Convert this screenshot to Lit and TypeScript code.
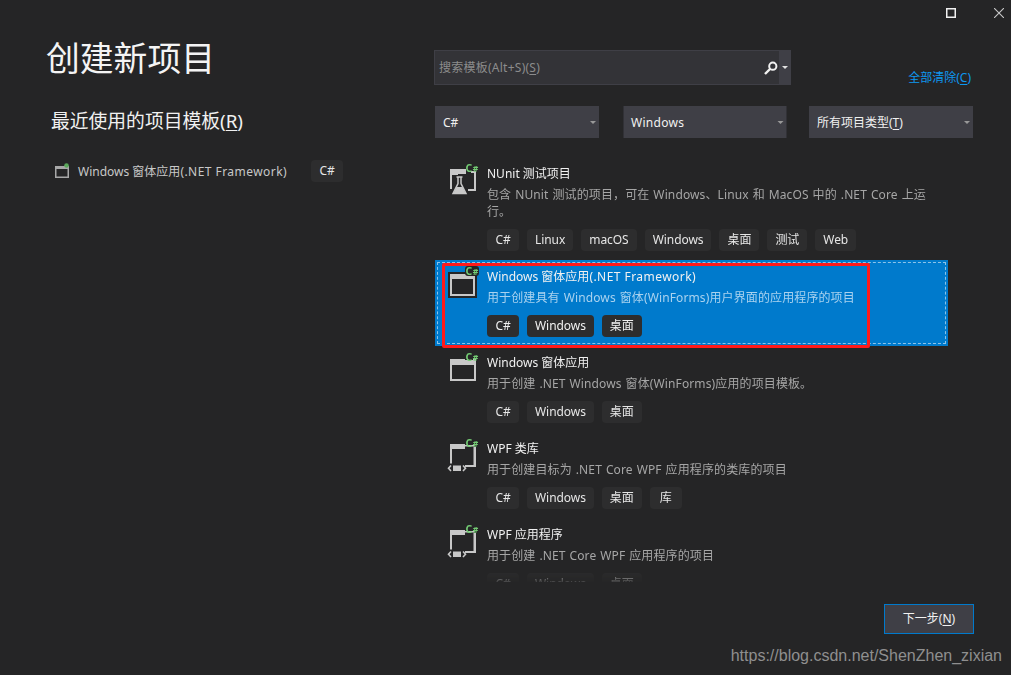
import { LitElement, html, css, svg } from "lit";
import { customElement } from "lit/decorators.js";

const badge = () => svg`<text class="cs" x="18.500" y="9.200" fill="#74cc74">C<tspan class="sharp" dx=".4">#</tspan></text>`;
const iconForm = svg`<path d="M3 7h15v1h8v-1h3v22H3z" fill="#c8c8c8"/><rect x="5" y="13" width="22" height="14" fill="#252526"/>`;
const iconFormSel = svg`<rect x="1" y="6" width="29" height="26" fill="#252526"/><rect x="3" y="8" width="25" height="22" fill="#c8c8c8"/><rect x="5" y="13" width="21" height="15" fill="#252526"/><rect x="18" y="0" width="14" height="10" rx="3" fill="#252526"/>`;
const iconWpf = svg`<path d="M3 6h15v1h9.500v1.500H18v2.500H5v14.500H3z" fill="#c8c8c8"/><path d="M26.500 9H29v20H18v-2h8.500z" fill="#c8c8c8"/><path d="M4 27.500l-2.500 2.700L4 33M16 27.500l2.500 2.700L16 33" stroke="#c8c8c8" stroke-width="1.600" fill="none"/><rect x="6" y="27.500" width="8" height="5.500" fill="#c8c8c8"/>`;
const iconTest = svg`<path d="M3 6h16v5h-8v1H5v14H3z" fill="#c8c8c8"/><path d="M24 8h5v20h-8v-2h6V10h-3z" fill="#c8c8c8"/><path d="M9 13h7v2h-1v5l5 10a1 1 0 0 1-1 2H6a1 1 0 0 1-1-2l5-10v-5H9z" fill="#252526" stroke="#252526" stroke-width="2"/><path d="M9.500 14h6M11 14v6.500L6 30.500h13L14 20.500V14" fill="none" stroke="#c8c8c8" stroke-width="1.500"/><path d="M9.500 24h6l3.500 7H6z" fill="#c8c8c8"/>`;

interface Item { title: unknown; desc: string; tags: string[]; icon: unknown; sel?: boolean }
const items: Item[] = [
  { title: "NUnit 测试项目", desc: "包含 NUnit 测试的项目，可在 Windows、Linux 和 MacOS 中的 .NET Core 上运行。", tags: ["C#", "Linux", "macOS", "Windows", "桌面", "测试", "Web"], icon: iconTest },
  { title: html`Windows 窗体应用<span class="lat">(.NET Framework)</span>`, desc: "用于创建具有 Windows 窗体(WinForms)用户界面的应用程序的项目", tags: ["C#", "Windows", "桌面"], icon: iconFormSel, sel: true },
  { title: "Windows 窗体应用", desc: "用于创建 .NET Windows 窗体(WinForms)应用的项目模板。", tags: ["C#", "Windows", "桌面"], icon: iconForm },
  { title: "WPF 类库", desc: "用于创建目标为 .NET Core WPF 应用程序的类库的项目", tags: ["C#", "Windows", "桌面", "库"], icon: iconWpf },
  { title: "WPF 应用程序", desc: "用于创建 .NET Core WPF 应用程序的项目", tags: ["C#", "Windows", "桌面"], icon: iconWpf },
];

@customElement("app-root")
export class AppRoot extends LitElement {
  static styles = css`
    :host { display: block; width: 1011px; height: 675px; background: #252526; color: #f1f1f1; position: relative; overflow: hidden;
      font: 12px/17px "Noto Sans", "Noto Sans CJK SC", sans-serif; }
    u { text-underline-offset: 2px; }
    .lat { letter-spacing: .45px; }
    .controls { height: 26px; display: flex; justify-content: flex-end; align-items: flex-start; gap: 38px; padding: 8px 7px 0 0; box-sizing: border-box; }
    .controls svg { display: block; width: 10px; height: 10px; }
    .main { display: grid; grid-template-columns: 435px 538px; }
    .left { padding-left: 46px; }
    h1 { margin: 6px 0 0; font: 400 33.800px/50px "Noto Sans CJK SC", sans-serif; color: #f4f4f4; }
    h2 { margin: 26px 0 0 5px; font: 400 18.800px/26px "Noto Sans", "Noto Sans CJK SC", sans-serif; color: #f1f1f1; }
    .recent { display: flex; align-items: center; margin: 26px 0 0 8px; color: #c8c8c8; height: 22px; }
    .recent svg { width: 16px; height: 16px; margin-right: 8px; flex: none; }
    .recent .tag { margin-left: 24px; }
    .right { padding-top: 24px; }
    .top { display: flex; align-items: flex-end; margin-left: -1px; }
    .search { width: 357px; height: 35px; box-sizing: border-box; display: flex; background: #333337; border: 1px solid #3f3f46; }
    .ph { flex: 1; padding-left: 4px; line-height: 34px; color: #8c8c8c; letter-spacing: .25px; }
    .sicon { width: 26px; display: flex; align-items: center; justify-content: flex-end; padding-right: 1px; box-sizing: border-box; }
    .sdrop { width: 11px; background: #3f3f46; display: flex; align-items: center; justify-content: center; }
    .link { margin-left: auto; margin-right: 2px; margin-bottom: -1px; line-height: 16px; color: #0e97f0; }
    .filters { display: grid; grid-template-columns: 164px 163px 164px; justify-content: space-between; margin-top: 21px; }
    .dd { height: 32px; background: #3f3f46; display: flex; align-items: center; justify-content: space-between; padding: 0 3px 0 8px; box-sizing: border-box; color: #f1f1f1; }
    .dd:nth-child(2) { transform: translateX(.5px); }
    .dd .w { letter-spacing: .3px; }
    .arrow { width: 0; height: 0; border: 3px solid transparent; border-top-color: #999; border-bottom: 0; }
    .list { width: 513px; height: 425px; margin-top: 19px; overflow: hidden;
      -webkit-mask-image: linear-gradient(to bottom, #000 calc(100% - 14px), rgba(0,0,0,.15) 100%);
      mask-image: linear-gradient(to bottom, #000 calc(100% - 14px), rgba(0,0,0,.15) 100%); }
    .item { position: relative; height: 86px; box-sizing: border-box; padding: 6px 12px 0; display: flex; gap: 8px; }
    .item.first { height: 103px; }
    .item.sel { background: #007acc; outline: 1px dashed rgba(255,255,255,.55); outline-offset: -3px; }
    .item > svg { width: 32px; height: 32px; flex: none; overflow: visible; }
    .cs { font: 700 10.500px "Noto Sans", sans-serif; }
    .sharp { font-size: 8.500px; }
    .body { flex: 1; max-width: 445px; }
    .title { line-height: 21px; color: #f1f1f1; }
    .desc { margin-top: 2px; color: #a6a6a6; letter-spacing: .12px; word-spacing: .7px; }
    .sel .desc { color: #a9d2ef; }
    .tags { display: flex; gap: 8px; margin-top: 9px; }
    .tag { height: 22px; min-width: 16px; text-align: center; line-height: 22px; padding: 0 8px; border-radius: 4px; background: #2d2d2e; color: #e6e6e6; white-space: nowrap; letter-spacing: -.06px; }
    .sel .tag { color: #f1f1f1; }
    .mark { position: absolute; left: 7px; top: 3px; width: 428px; height: 85px; box-sizing: border-box; border: 3px solid #ff1a1a; border-radius: 2px; pointer-events: none; }
    .foot { display: flex; justify-content: flex-end; margin: 22px -1px 0 0; }
    .btn { width: 90px; height: 30px; box-sizing: border-box; border: 1px solid #007acc; background: #3f3f46; color: #f1f1f1; text-align: center; line-height: 28px; }
    .wm { position: absolute; right: 9px; top: 647px; font: 16px/18px "Liberation Sans", sans-serif; color: #8f8f8f; }
  `;

  render() {
    return html`
      <div class="controls">
        <svg viewBox="0 0 10 10"><rect x=".75" y=".75" width="8.500" height="8.500" fill="none" stroke="#f1f1f1" stroke-width="1.500"/></svg>
        <svg viewBox="0 0 10 10"><path d="M0 0L10 10M10 0L0 10" stroke="#c8c8c8" stroke-width="1.100"/></svg>
      </div>
      <div class="main">
        <div class="left">
          <h1>创建新项目</h1>
          <h2>最近使用的项目模板(<u>R</u>)</h2>
          <div class="recent">
            <svg viewBox="0 0 16 16"><path d="M1 3h10v1h2V3h2v12H1z" fill="#a8a8a8"/><rect x="2.500" y="6" width="11" height="7.500" fill="#252526"/><circle cx="12.500" cy="2.500" r="2.300" fill="#5aa85a"/></svg>
            <span>Windows 窗体应用<span class="lat">(.NET Framework)</span></span>
            <span class="tag">C#</span>
          </div>
        </div>
        <div class="right">
          <div class="top">
            <div class="search">
              <div class="ph">搜索模板(Alt+S)(<u>S</u>)</div>
              <div class="sicon"><svg width="14" height="14" viewBox="0 0 14 14"><circle cx="8.800" cy="5.200" r="3.600" fill="none" stroke="#f1f1f1" stroke-width="2"/><path d="M6 8L1 13" stroke="#f1f1f1" stroke-width="2.400"/></svg></div>
              <div class="sdrop"><span class="arrow" style="border-top-color:#e0e0e0"></span></div>
            </div>
            <div class="link">全部清除(<u>C</u>)</div>
          </div>
          <div class="filters">
            <div class="dd"><span>C#</span><span class="arrow"></span></div>
            <div class="dd"><span class="w">Windows</span><span class="arrow"></span></div>
            <div class="dd"><span>所有项目类型(<u>T</u>)</span><span class="arrow"></span></div>
          </div>
          <div class="list">
            ${items.map((it, i) => html`
              <div class="item ${i === 0 ? "first" : ""} ${it.sel ? "sel" : ""}">
                <svg viewBox="0 0 32 32">${it.icon}${badge()}</svg>
                <div class="body">
                  <div class="title">${it.title}</div>
                  <div class="desc">${it.desc}</div>
                  <div class="tags">${it.tags.map((t) => html`<span class="tag">${t}</span>`)}</div>
                </div>
                ${it.sel ? html`<div class="mark"></div>` : ""}
              </div>`)}
          </div>
          <div class="foot"><div class="btn">下一步(<u>N</u>)</div></div>
        </div>
      </div>
      <div class="wm">https://blog.csdn.net/ShenZhen_zixian</div>
    `;
  }
}
